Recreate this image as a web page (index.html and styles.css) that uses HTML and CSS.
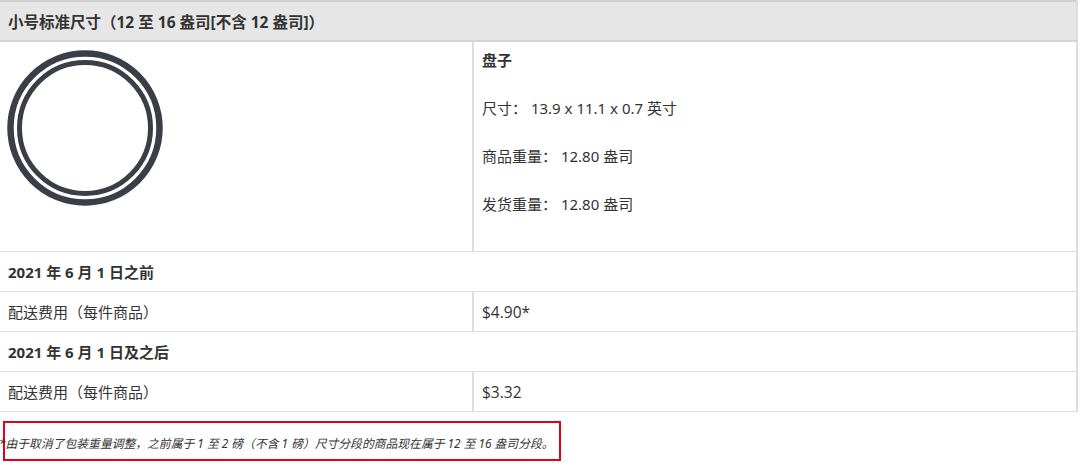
FILE: index.html
```html
<!DOCTYPE html>
<html lang="zh-CN">
<head>
<meta charset="utf-8">
<link rel="stylesheet" href="styles.css">
</head>
<body>
<table class="fees">
  <colgroup>
    <col class="col-a">
    <col class="col-b">
  </colgroup>
  <tr class="head-row">
    <th colspan="2">小号标准尺寸（12 至 16 盎司[不含 12 盎司]）</th>
  </tr>
  <tr class="product-row">
    <td class="img-cell">
      <svg class="plate" width="156" height="156" viewBox="0 0 156 156">
        <circle cx="78" cy="78" r="74.5" fill="none" stroke="#3a3f47" stroke-width="6.5"/>
        <circle cx="78" cy="78" r="65.5" fill="none" stroke="#3a3f47" stroke-width="5"/>
      </svg>
    </td>
    <td class="info-cell">
      <p class="name">盘子</p>
      <p>尺寸： 13.9 x 11.1 x 0.7 英寸</p>
      <p>商品重量： 12.80 盎司</p>
      <p>发货重量： 12.80 盎司</p>
    </td>
  </tr>
  <tr class="sub-head">
    <td colspan="2">2021 年 6 月 1 日之前</td>
  </tr>
  <tr>
    <td>配送费用（每件商品）</td>
    <td class="price">$4.90*</td>
  </tr>
  <tr class="sub-head">
    <td colspan="2">2021 年 6 月 1 日及之后</td>
  </tr>
  <tr>
    <td>配送费用（每件商品）</td>
    <td class="price">$3.32</td>
  </tr>
</table>
<div class="note">
  <p>*由于取消了包装重量调整，之前属于 1 至 2 磅（不含 1 磅）尺寸分段的商品现在属于 12 至 16 盎司分段。</p>
</div>
</body>
</html>
```
FILE: styles.css
```css
html, body {
  margin: 0;
  padding: 0;
  background: #ffffff;
}
body {
  font-family: "Noto Sans", "Noto Sans CJK SC", sans-serif;
  color: #333333;
  font-size: 15px;
}
.fees {
  width: 1078px;
  border-collapse: collapse;
  table-layout: fixed;
  border-top: 2px solid #d0d0d0;
  border-right: 2px solid #dddddd;
}
.col-a {
  width: 473px;
}
.fees td, .fees th {
  border-bottom: 1px solid #dddddd;
  padding: 0 8px;
  text-align: left;
  vertical-align: middle;
  height: 39px;
}
.fees td + td {
  border-left: 2px solid #dddddd;
}
.head-row th {
  background: #e6e6e6;
  height: 38px;
  font-size: 15.5px;
  font-weight: 700;
  color: #333333;
  border-bottom: 2px solid #d4d4d4;
}
.fees .product-row td {
  height: auto;
  vertical-align: top;
}
.fees .img-cell {
  padding: 8px 7px 0 7px;
}
.plate {
  display: block;
}
.fees .info-cell {
  padding: 6px 8px 35px 8px;
}
.info-cell p {
  margin: 0 0 24px 0;
  line-height: 24px;
}
.info-cell p:last-child {
  margin-bottom: 0;
}
.info-cell .name {
  font-weight: 700;
}
.sub-head td {
  font-weight: 700;
  font-size: 15px;
}
.price {
  font-family: "Open Sans", "Noto Sans CJK SC", sans-serif;
  font-size: 15.5px;
}
.note {
  margin: 9px 0 0 3px;
  width: 554px;
  height: 36px;
  border: 2px solid #e2001a;
  display: flex;
  align-items: center;
}
.note p {
  margin: 3px 0 0 -6px;
  font-size: 11.8px;
  font-style: italic;
  color: #333333;
  white-space: nowrap;
}
```
